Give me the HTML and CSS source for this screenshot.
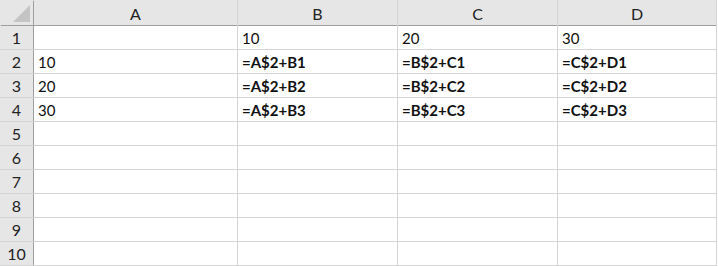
FILE: index.html
```html
<!DOCTYPE html>
<html lang="en">
<head>
    <meta charset="UTF-8">
    <title>Sheet</title>
    <link rel="stylesheet" href="styles.css">
</head>
<body>
    <div class="sheet">
        <div class="hd corner"><span class="tri"></span></div>
        <div class="hd col">A</div>
        <div class="hd col">B</div>
        <div class="hd col">C</div>
        <div class="hd col">D</div>

        <div class="hd row">1</div>
        <div class="cell"></div>
        <div class="cell">10</div>
        <div class="cell">20</div>
        <div class="cell">30</div>

        <div class="hd row">2</div>
        <div class="cell">10</div>
        <div class="cell f">=A$2+B1</div>
        <div class="cell f">=B$2+C1</div>
        <div class="cell f">=C$2+D1</div>

        <div class="hd row">3</div>
        <div class="cell">20</div>
        <div class="cell f">=A$2+B2</div>
        <div class="cell f">=B$2+C2</div>
        <div class="cell f">=C$2+D2</div>

        <div class="hd row">4</div>
        <div class="cell">30</div>
        <div class="cell f">=A$2+B3</div>
        <div class="cell f">=B$2+C3</div>
        <div class="cell f">=C$2+D3</div>

        <div class="hd row">5</div>
        <div class="cell"></div><div class="cell"></div><div class="cell"></div><div class="cell"></div>
        <div class="hd row">6</div>
        <div class="cell"></div><div class="cell"></div><div class="cell"></div><div class="cell"></div>
        <div class="hd row">7</div>
        <div class="cell"></div><div class="cell"></div><div class="cell"></div><div class="cell"></div>
        <div class="hd row">8</div>
        <div class="cell"></div><div class="cell"></div><div class="cell"></div><div class="cell"></div>
        <div class="hd row">9</div>
        <div class="cell"></div><div class="cell"></div><div class="cell"></div><div class="cell"></div>
        <div class="hd row">10</div>
        <div class="cell"></div><div class="cell"></div><div class="cell"></div><div class="cell"></div>
    </div>
</body>
</html>
```

FILE: styles.css
```css
body {
    margin: 0;
    background: #fff;
    font-family: 'Lato', 'Liberation Sans', sans-serif;
    font-size: 15px;
    color: #111;
}

.sheet {
    display: grid;
    grid-template-columns: 33px 203px 159px 159px 158px;
    grid-template-rows: 25px repeat(10, 23px);
    gap: 1px;
    width: 716px;
    background: #d4d4d4;
    border-right: 1px solid #d4d4d4;
    border-bottom: 1px solid #d4d4d4;
}

.hd {
    background: #e6e6e6;
    display: flex;
    align-items: center;
    justify-content: center;
    color: #222;
    font-size: 16px;
}

.col {
    box-shadow: 0 1px 0 #9e9e9e;
    padding-top: 2px;
}

.row {
    box-shadow: 1px 0 0 #9e9e9e;
}

.corner {
    position: relative;
    box-shadow: 1px 1px 0 #9e9e9e;
}

.tri {
    position: absolute;
    right: 3px;
    bottom: 3px;
    width: 0;
    height: 0;
    border-left: 17px solid transparent;
    border-bottom: 17px solid #c4c4c4;
}

.cell {
    background: #fff;
    padding: 1px 4px 0;
    display: flex;
    align-items: center;
}

.f {
    font-weight: bold;
}
```
